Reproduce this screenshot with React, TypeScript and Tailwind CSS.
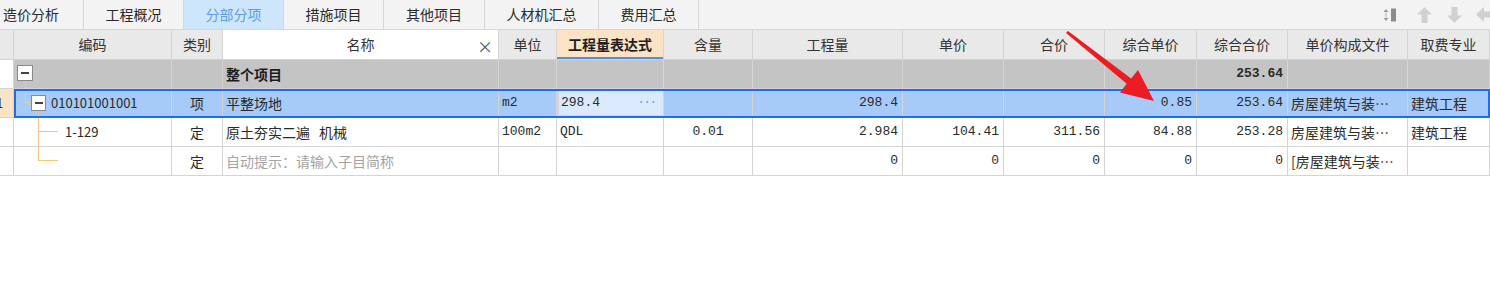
import clsx from "clsx";
import type { ReactNode } from "react";

const cols = [
  "w-[14px]",
  "w-[158px]",
  "w-[51px]",
  "w-[276px]",
  "w-[58px]",
  "w-[107px]",
  "w-[89px]",
  "w-[150px]",
  "w-[101px]",
  "w-[101px]",
  "w-[92px]",
  "w-[91px]",
  "w-[120px]",
  "flex-1",
];

const headers = ["", "编码", "类别", "名称", "单位", "工程量表达式", "含量", "工程量", "单价", "合价", "综合单价", "综合合价", "单价构成文件", "取费专业"];

const tabs = [
  { label: "造价分析", w: "w-[84px]", left: true },
  { label: "工程概况", w: "w-[100px]" },
  { label: "分部分项", w: "w-[100px]", active: true },
  { label: "措施项目", w: "w-[100px]" },
  { label: "其他项目", w: "w-[101px]" },
  { label: "人材机汇总", w: "w-[114px]" },
  { label: "费用汇总", w: "w-[100px]" },
];

const mono = "font-['Liberation_Mono',monospace] text-[13px]";

function Cell({ i, className, children }: { i: number; className?: string; children?: ReactNode }) {
  return (
    <div
      className={clsx(
        cols[i],
        "relative flex h-full shrink-0 items-center overflow-hidden whitespace-nowrap border-r border-[#d4d4d4]",
        className
      )}
    >
      {children}
    </div>
  );
}

function MinusBox({ className }: { className?: string }) {
  return (
    <div className={clsx("absolute flex items-center justify-center border border-[#8a8a8a] bg-white", className)}>
      <div className="h-[1.5px] w-[8px] bg-[#444]" />
    </div>
  );
}

function Tree({ kind }: { kind: "root" | "item" | "child" | "last" }) {
  const line = "absolute bg-[#f8c67e]";
  if (kind === "root")
    return (
      <>
        <div className={clsx(line, "left-[11px] top-[21px] h-[8px] w-px")} />
        <MinusBox className="left-[3px] top-[5px] h-[16px] w-[16px]" />
      </>
    );
  if (kind === "item")
    return (
      <>
        <div className={clsx(line, "left-[11px] top-0 h-[13px] w-px")} />
        <div className={clsx(line, "left-[11px] top-[13px] h-px w-[6px]")} />
        <div className={clsx(line, "left-[24px] top-[22px] h-[7px] w-px")} />
        <MinusBox className="left-[17px] top-[6px] h-[16px] w-[15px]" />
      </>
    );
  return (
    <>
      <div className={clsx(line, "left-[24px] top-0 w-px", kind === "child" ? "h-full" : "h-[13px]")} />
      <div className={clsx(line, "left-[24px] top-[13px] h-px w-[20px]")} />
    </>
  );
}

function RedArrow() {
  return (
    <svg className="pointer-events-none absolute left-0 top-0" width="1490" height="299">
      <polygon
        points="1066,33 1068,31 1131.1,78.4 1138,70 1154,101 1120,92.5 1126.7,83.8"
        fill="#ec1c24"
      />
    </svg>
  );
}

function ToolIcons() {
  return (
    <div className="ml-auto flex items-center gap-[13px] pr-0">
      <svg width="16" height="16" viewBox="0 0 16 16">
        <path d="M3 2 L5.5 5 H0.5 Z" fill="#9a9a9a" />
        <path d="M3 14 L5.5 11 H0.5 Z" fill="#9a9a9a" />
        <rect x="2.5" y="5.5" width="1" height="5" fill="#b5b5b5" />
        <rect x="8" y="1.5" width="5" height="13" fill="#8c8c8c" />
      </svg>
      <svg width="17" height="18" viewBox="0 0 17 18" className="ml-[4px]">
        <path d="M8.5 1 L16 8.5 H11.5 V17 H5.5 V8.5 H1 Z" fill="#d0d0d0" />
      </svg>
      <svg width="17" height="18" viewBox="0 0 17 18">
        <path d="M8.5 17 L16 9.5 H11.5 V1 H5.5 V9.5 H1 Z" fill="#d0d0d0" />
      </svg>
      <svg width="14" height="17" viewBox="0 0 14 17">
        <path d="M0 8.5 L8 1 V5.5 H14 V11.5 H8 V16 Z" fill="#d0d0d0" />
      </svg>
    </div>
  );
}

export default function App() {
  return (
    <div className="relative h-[299px] w-[1490px] overflow-hidden bg-white font-['Noto_Sans_CJK_SC','Noto_Sans',sans-serif] text-[14px] text-[#2a2a2a]">
      {/* tab strip */}
      <div className="flex h-[30px] border-b border-[#d6d6d6] bg-[#f3f3f3]">
        {tabs.map((t) => (
          <div
            key={t.label}
            className={clsx(
              t.w,
              "flex h-full items-center border-r border-[#d6d6d6]",
              t.left ? "pl-[3px]" : "justify-center",
              t.active ? "bg-[#cde6fb] text-[#5a9fe6]" : "text-[#2a2a2a]"
            )}
          >
            {t.label}
          </div>
        ))}
        <ToolIcons />
      </div>

      {/* header */}
      <div className="flex h-[30px] border-b border-[#d2d2d2] bg-[#e9e9e9] text-[#333]">
        {headers.map((h, i) => (
          <Cell
            key={i}
            i={i}
            className={clsx(
              "justify-center",
              i === 3 && "bg-white",
              i === 5 && "bg-[#fde3c6] font-bold text-[#1f1f1f]"
            )}
          >
            {h}
            {i === 3 && <span className="absolute right-[5px] top-[4px] text-[16px] text-[#555]">×</span>}
            {i === 5 && <div className="absolute bottom-0 left-0 h-[2px] w-full bg-[#4a8fe6]" />}
          </Cell>
        ))}
      </div>

      {/* 整个项目 */}
      <div className="flex h-[29px] border-b border-[#d4d4d4] bg-[#c4c4c4]">
        <Cell i={0} className="bg-white" />
        <Cell i={1}>
          <Tree kind="root" />
        </Cell>
        <Cell i={2} />
        <Cell i={3} className="pl-[3px] font-bold text-[#1c1c1c]">
          整个项目
        </Cell>
        {[4, 5, 6, 7, 8, 9, 10].map((i) => (
          <Cell key={i} i={i} />
        ))}
        <Cell i={11} className={clsx(mono, "justify-end pr-[4px] font-bold")}>
          253.64
        </Cell>
        <Cell i={12} />
        <Cell i={13} />
      </div>

      {/* selected row */}
      <div className="flex h-[29px] border-b border-[#d4d4d4]">
        <Cell i={0} className="bg-[#fde3c6] text-[13px]">
          <span className="-ml-[4px]">1</span>
        </Cell>
        <div className="relative flex flex-1 bg-[#a6cbf8]">
          <Cell i={1}>
            <Tree kind="item" />
            <span className="pl-[37px] text-[13px]">010101001001</span>
          </Cell>
          <Cell i={2} className="justify-center">
            项
          </Cell>
          <Cell i={3} className="pl-[3px]">
            平整场地
          </Cell>
          <Cell i={4} className={clsx(mono, "pl-[3px]")}>
            m2
          </Cell>
          <Cell i={5} className={clsx(mono, "border-2 border-[#1b6fef] bg-[#dbe9fc] pl-[2px]")}>
            298.4
            <span className="absolute right-[7px] top-[3px] text-[12px] tracking-[-1px] text-[#5d9de6]">···</span>
          </Cell>
          <Cell i={6} />
          <Cell i={7} className={clsx(mono, "justify-end pr-[4px]")}>
            298.4
          </Cell>
          <Cell i={8} />
          <Cell i={9} />
          <Cell i={10} className={clsx(mono, "justify-end pr-[4px]")}>
            0.85
          </Cell>
          <Cell i={11} className={clsx(mono, "justify-end pr-[4px]")}>
            253.64
          </Cell>
          <Cell i={12} className="pl-[3px]">
            房屋建筑与装…
          </Cell>
          <Cell i={13} className="border-r-0 pl-[3px]">
            建筑工程
          </Cell>
          <div className="pointer-events-none absolute -bottom-px left-0 right-0 top-0 border-2 border-[#1b6fef]" />
        </div>
      </div>

      {/* 1-129 */}
      <div className="flex h-[29px] border-b border-[#d4d4d4]">
        <Cell i={0} />
        <Cell i={1}>
          <Tree kind="child" />
          <span className="pl-[51px] text-[13px]">1-129</span>
        </Cell>
        <Cell i={2} className="justify-center">
          定
        </Cell>
        <Cell i={3} className="pl-[3px]">
          原土夯实二遍<span className="ml-[9px]">机械</span>
        </Cell>
        <Cell i={4} className={clsx(mono, "pl-[3px]")}>
          100m2
        </Cell>
        <Cell i={5} className={clsx(mono, "pl-[3px]")}>
          QDL
        </Cell>
        <Cell i={6} className={clsx(mono, "justify-center")}>
          0.01
        </Cell>
        <Cell i={7} className={clsx(mono, "justify-end pr-[4px]")}>
          2.984
        </Cell>
        <Cell i={8} className={clsx(mono, "justify-end pr-[4px]")}>
          104.41
        </Cell>
        <Cell i={9} className={clsx(mono, "justify-end pr-[4px]")}>
          311.56
        </Cell>
        <Cell i={10} className={clsx(mono, "justify-end pr-[4px]")}>
          84.88
        </Cell>
        <Cell i={11} className={clsx(mono, "justify-end pr-[4px]")}>
          253.28
        </Cell>
        <Cell i={12} className="pl-[3px]">
          房屋建筑与装…
        </Cell>
        <Cell i={13} className="pl-[3px]">
          建筑工程
        </Cell>
      </div>

      {/* empty child */}
      <div className="flex h-[29px] border-b border-[#d4d4d4]">
        <Cell i={0} />
        <Cell i={1}>
          <Tree kind="last" />
        </Cell>
        <Cell i={2} className="justify-center">
          定
        </Cell>
        <Cell i={3} className="pl-[3px] text-[#a3a3a3]">
          自动提示：请输入子目简称
        </Cell>
        <Cell i={4} />
        <Cell i={5} />
        <Cell i={6} />
        {[7, 8, 9, 10, 11].map((i) => (
          <Cell key={i} i={i} className={clsx(mono, "justify-end pr-[4px]")}>
            0
          </Cell>
        ))}
        <Cell i={12} className="pl-[3px]">
          [房屋建筑与装…
        </Cell>
        <Cell i={13} />
      </div>

      <RedArrow />
    </div>
  );
}
